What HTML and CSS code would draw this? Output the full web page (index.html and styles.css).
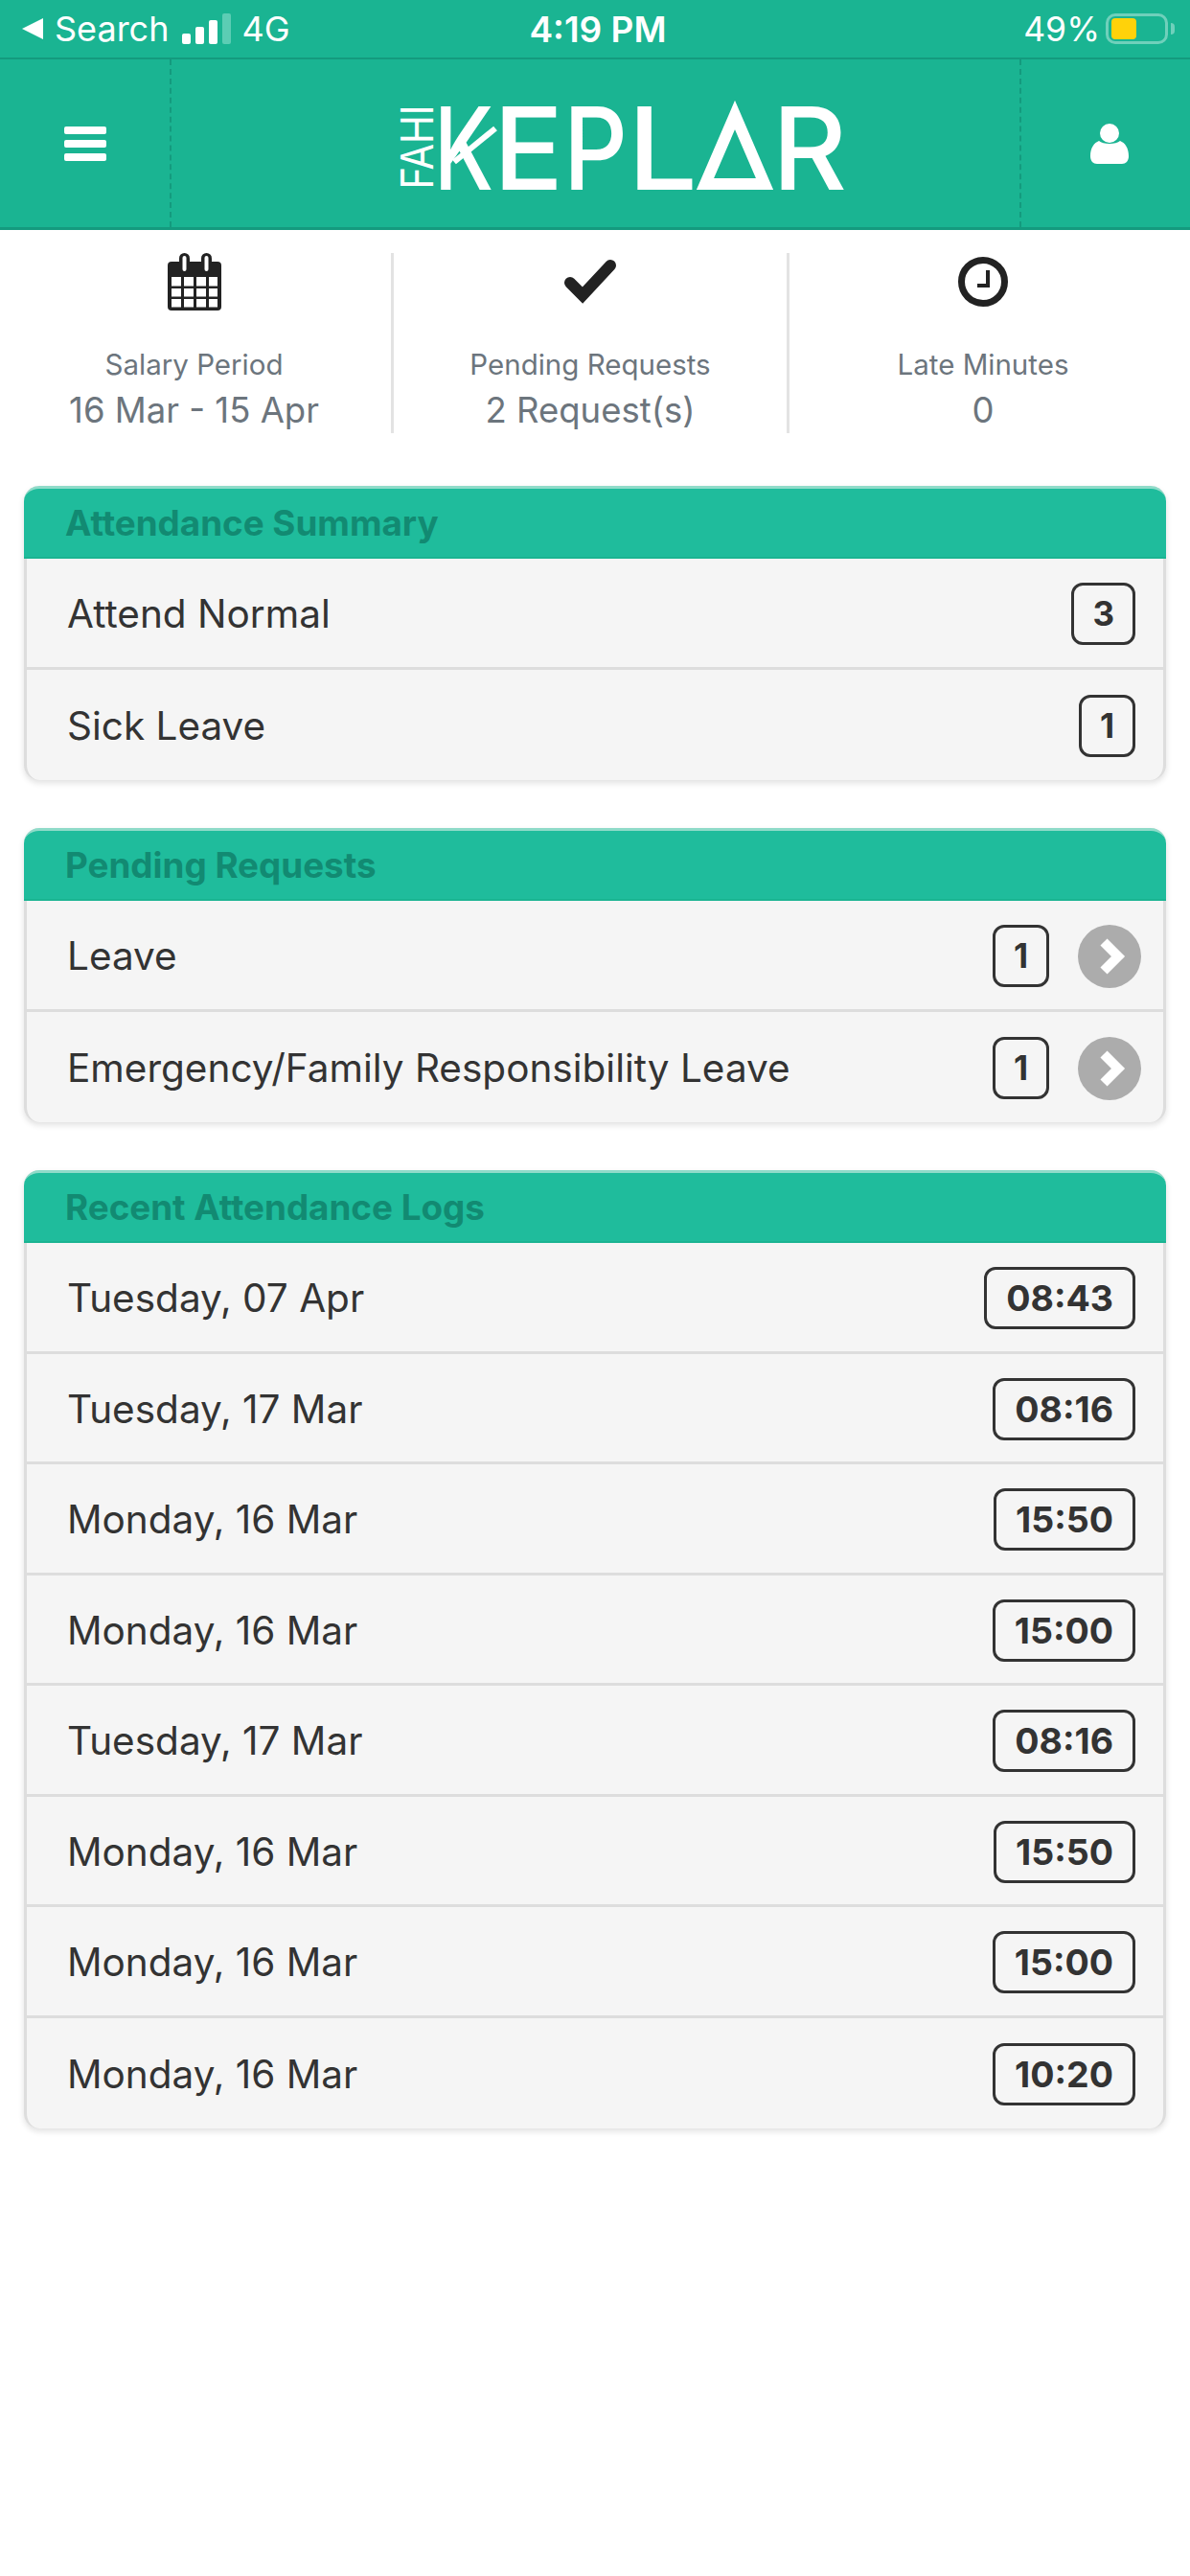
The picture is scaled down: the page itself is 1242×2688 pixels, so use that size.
FILE: index.html
```html
<!DOCTYPE html>
<html lang="en">
<head>
	<meta charset="UTF-8">
	<title>Keplar</title>
	<link rel="stylesheet" href="styles.css">
</head>
<body>

<div class="status">
	<div class="status-left">
		<svg class="back" width="24" height="24" viewBox="0 0 24 24"><path d="M1 12L23 1V23Z" fill="#fff"/></svg>
		<span>Search</span>
		<svg class="signal" width="52" height="34" viewBox="0 0 52 34">
			<rect x="0" y="22" width="9" height="11" rx="2" fill="#fff"/>
			<rect x="14" y="15" width="9" height="18" rx="2" fill="#fff"/>
			<rect x="28" y="8" width="9" height="25" rx="2" fill="#fff"/>
			<rect x="42" y="1" width="9" height="32" rx="2" fill="#5ccdb4"/>
		</svg>
		<span>4G</span>
	</div>
	<div class="status-time">4:19 PM</div>
	<div class="status-right">
		<span>49%</span>
		<div class="battery"><div class="battery-fill"></div></div>
		<div class="battery-nub"></div>
	</div>
</div>

<div class="nav">
	<div class="nav-side nav-menu">
		<svg width="44" height="36" viewBox="0 0 44 36" fill="#fff">
			<rect x="0" y="0" width="44" height="8" rx="2"/>
			<rect x="0" y="14" width="44" height="8" rx="2"/>
			<rect x="0" y="28" width="44" height="8" rx="2"/>
		</svg>
	</div>
	<div class="nav-logo">
		<svg width="480" height="156" viewBox="-12 0 480 156" class="logo">
			<text class="logo-small" transform="translate(35 125.5) rotate(-90)" textLength="88" lengthAdjust="spacingAndGlyphs">FAHI</text>
			<text class="logo-big" x="36" y="125.5" textLength="62" lengthAdjust="spacingAndGlyphs">K</text>
			<path d="M57 97L100 62" stroke="#fff" stroke-width="6" fill="none"/>
			<text class="logo-big" x="98" y="125.5" textLength="73" lengthAdjust="spacingAndGlyphs">E</text>
			<text class="logo-big" x="171" y="125.5" textLength="67" lengthAdjust="spacingAndGlyphs">P</text>
			<text class="logo-big" x="238" y="125.5" textLength="73" lengthAdjust="spacingAndGlyphs">L</text>
			<path d="M350 48L319 120H381Z" fill="none" stroke="#fff" stroke-width="12"/>
			<text class="logo-big" x="389" y="125.5" textLength="78" lengthAdjust="spacingAndGlyphs">R</text>
		</svg>
	</div>
	<div class="nav-side nav-user">
		<svg width="40" height="42" viewBox="0 0 40 42" fill="#fff">
			<circle cx="20" cy="10" r="10"/>
			<path d="M9 18C13 22 27 22 31 18C36 20 40 25 40 34C40 39 37 42 33 42H7C3 42 0 39 0 34C0 25 4 20 9 18Z"/>
		</svg>
	</div>
</div>

<div class="stats">
	<div class="stat stat-first">
		<svg class="stat-icon" width="56" height="60" viewBox="0 0 56 60">
			<rect x="0" y="9" width="56" height="51" rx="4" fill="#222"/>
			<rect x="12" y="0" width="11" height="21" rx="5.5" fill="#222"/>
			<rect x="35" y="0" width="11" height="21" rx="5.5" fill="#222"/>
			<rect x="15.5" y="3" width="4" height="16" rx="2" fill="#fff"/>
			<rect x="38.5" y="3" width="4" height="16" rx="2" fill="#fff"/>
			<g fill="#fff">
				<rect x="4" y="25" width="10" height="9.5"/><rect x="17" y="25" width="10" height="9.5"/><rect x="30" y="25" width="10" height="9.5"/><rect x="43" y="25" width="9" height="9.5"/>
				<rect x="4" y="37" width="10" height="8.5"/><rect x="17" y="37" width="10" height="8.5"/><rect x="30" y="37" width="10" height="8.5"/><rect x="43" y="37" width="9" height="8.5"/>
				<rect x="4" y="48" width="10" height="8.5"/><rect x="17" y="48" width="10" height="8.5"/><rect x="30" y="48" width="10" height="8.5"/><rect x="43" y="48" width="9" height="8.5"/>
			</g>
		</svg>
		<div class="stat-label">Salary Period</div>
		<div class="stat-value">16 Mar - 15 Apr</div>
	</div>
	<div class="stat">
		<svg class="stat-icon" width="56" height="60" viewBox="0 0 56 60">
			<path d="M7 31L20 44L49 13" fill="none" stroke="#222" stroke-width="12" stroke-linecap="round" stroke-linejoin="miter"/>
		</svg>
		<div class="stat-label">Pending Requests</div>
		<div class="stat-value">2 Request(s)</div>
	</div>
	<div class="stat stat-last">
		<svg class="stat-icon" width="56" height="60" viewBox="0 0 56 60">
			<circle cx="28" cy="30" r="22.5" fill="none" stroke="#222" stroke-width="7"/>
			<path d="M33 18V34H22" fill="none" stroke="#222" stroke-width="4"/>
		</svg>
		<div class="stat-label">Late Minutes</div>
		<div class="stat-value">0</div>
	</div>
</div>

<div class="card">
	<div class="card-head">Attendance Summary</div>
	<div class="row"><span>Attend Normal</span><span class="badge badge-num">3</span></div>
	<div class="row"><span>Sick Leave</span><span class="badge badge-num">1</span></div>
</div>

<div class="card">
	<div class="card-head">Pending Requests</div>
	<div class="row">
		<span>Leave</span>
		<span class="row-end">
			<span class="badge badge-num">1</span>
			<svg width="66" height="66" viewBox="0 0 66 66"><circle cx="33" cy="33" r="33" fill="#acacac"/><path d="M27 18L42 33L27 48" fill="none" stroke="#fff" stroke-width="10"/></svg>
		</span>
	</div>
	<div class="row">
		<span>Emergency/Family Responsibility Leave</span>
		<span class="row-end">
			<span class="badge badge-num">1</span>
			<svg width="66" height="66" viewBox="0 0 66 66"><circle cx="33" cy="33" r="33" fill="#acacac"/><path d="M27 18L42 33L27 48" fill="none" stroke="#fff" stroke-width="10"/></svg>
		</span>
	</div>
</div>

<div class="card">
	<div class="card-head">Recent Attendance Logs</div>
	<div class="row"><span>Tuesday, 07 Apr</span><span class="badge">08:43</span></div>
	<div class="row"><span>Tuesday, 17 Mar</span><span class="badge">08:16</span></div>
	<div class="row"><span>Monday, 16 Mar</span><span class="badge">15:50</span></div>
	<div class="row"><span>Monday, 16 Mar</span><span class="badge">15:00</span></div>
	<div class="row"><span>Tuesday, 17 Mar</span><span class="badge">08:16</span></div>
	<div class="row"><span>Monday, 16 Mar</span><span class="badge">15:50</span></div>
	<div class="row"><span>Monday, 16 Mar</span><span class="badge">15:00</span></div>
	<div class="row"><span>Monday, 16 Mar</span><span class="badge">10:20</span></div>
</div>

</body>
</html>
```

FILE: styles.css
```css
*{box-sizing: border-box;}
body{margin: 0;background: #fff;font-family: Inter, "Liberation Sans", sans-serif;color: #333;}

.status{height: 62px;background: #1ab492;border-bottom: 2px solid #149a7e;color: #fff;display: grid;grid-template-columns: 1fr auto 1fr;align-items: center;font-size: 36px;padding: 0 16px 0 22px;}
.status-left{display: flex;align-items: center;}
.back{margin-right: 11px;}
.signal{margin: 0 10px 0 14px;}
.status-time{font-weight: 600;font-size: 37px;}
.status-right{display: flex;align-items: center;justify-content: flex-end;font-size: 35.5px;}
.battery{width: 65px;height: 32px;border: 3px solid #6fd0bb;border-radius: 10px;margin-left: 6px;padding: 2px 3px;}
.battery-fill{width: 26px;height: 22px;background: #ffd20a;border-radius: 4px;}
.battery-nub{width: 4px;height: 12px;background: #6fd0bb;border-radius: 0 4px 4px 0;margin-left: 3px;}

.nav{height: 178px;background: #1ab492;border-bottom: 3px solid #149a7e;display: flex;}
.nav-side{display: flex;align-items: center;justify-content: center;}
.nav-menu{width: 179px;border-right: 2px dashed #149a7e;}
.nav-logo{flex: 1;display: flex;align-items: center;padding-left: 226px;}
.nav-user{width: 178px;border-left: 2px dashed #149a7e;padding-left: 8px;}
.logo-big{font-family: Inter, sans-serif;font-size: 120px;font-weight: 500;fill: #fff;}
.logo-small{font-family: Inter, sans-serif;font-size: 47px;font-weight: 400;fill: #fff;}

.stats{display: flex;padding-top: 24px;margin-bottom: 55px;}
.stat{width: 413px;height: 188px;border-right: 3px solid #e3e3e3;display: flex;flex-direction: column;align-items: center;}
.stat-first{width: 411px;padding-right: 3px;}
.stat-last{width: 404px;border-right: 0;}
.stat-icon{margin-bottom: 39px;}
.stat-label{font-size: 29.5px;line-height: 34px;color: #6c757d;}
.stat-value{font-size: 36.5px;line-height: 48px;margin-top: 7px;color: #6c757d;}

.card{margin: 0 25px 50px;background: #f5f5f5;border: solid #ddd;border-width: 0 3px;border-radius: 16px;box-shadow: 0 3px 6px rgba(0,0,0,.12);}
.card-head{height: 76px;margin: 0 -3px;background: #1fbc9c;border-top: 3px solid #8fdbc9;border-bottom: 2px solid #1ab492;border-radius: 16px 16px 0 0;color: #128a72;font-weight: 700;font-size: 36.8px;line-height: 71px;padding-left: 43px;}
.row{height: 115.5px;border-bottom: 3px solid #ddd;padding: 3px 29px 0 42px;display: flex;align-items: center;justify-content: space-between;font-size: 40.5px;}
.row:last-child{border-bottom: 0;}
.row-end{display: flex;align-items: center;gap: 30px;margin-right: -6px;}
.badge{min-height: 65px;padding: 0 20px;border: 3px solid #333;border-radius: 12px;font-size: 37.5px;font-weight: 700;line-height: 59px;}
.badge-num{font-size: 35px;padding: 0 19px;}
```
